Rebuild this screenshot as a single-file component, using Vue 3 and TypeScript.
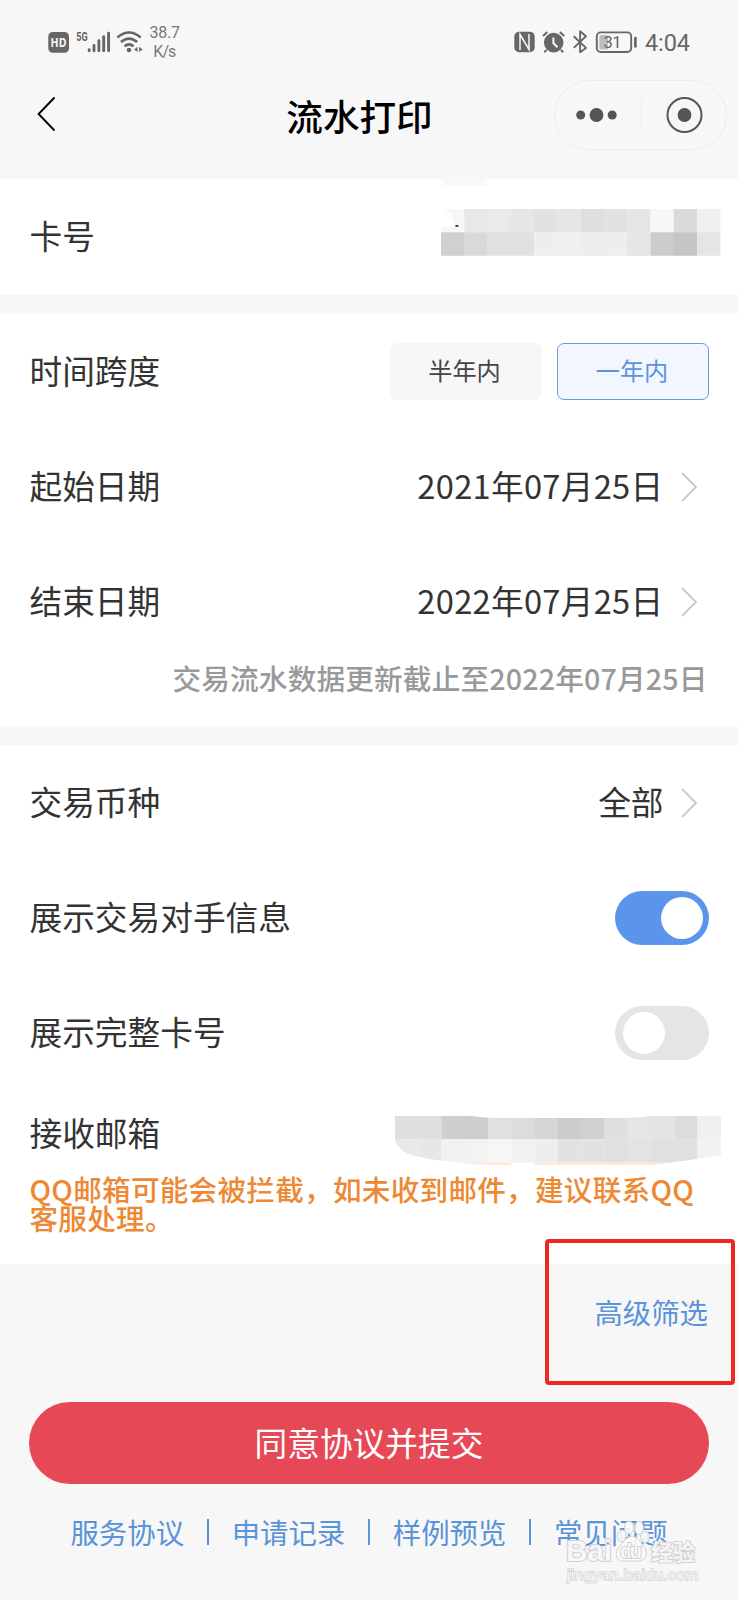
<script setup lang="ts">
import { ref } from 'vue'

interface Cell { x: number; y: number; fill: string }

const CELL = 23.27

function cells(rows: string[][]): Cell[] {
  return rows.flatMap((row, r) =>
    row.map((tone, c) => ({ x: c * CELL, y: r * CELL, fill: '#' + tone + tone + tone })),
  )
}

const cardMask = cells([
  ['f7', 'e8', 'ea', 'e6', 'e2', 'e6', 'df', 'e2', 'e5', 'f7', 'da', 'f0'],
  ['d0', 'd9', 'e0', 'e1', 'ee', 'ef', 'ed', 'ee', 'e6', 'cc', 'c5', 'e5'],
])
const mailMask = cells([
  ['df', 'df', 'cf', 'ce', 'e0', 'dc', 'd6', 'cc', 'd0', 'df', 'e5', 'e3', 'dc', 'f0'],
  ['e9', 'e7', 'f2', 'f3', 'f6', 'f1', 'ee', 'e2', 'e2', 'e0', 'e3', 'e0', 'e0', 'f2'],
])

const spans = ['半年内', '一年内']
const activeSpan = ref(1)
const dates = [
  { label: '起始日期', value: '2021年07月25日' },
  { label: '结束日期', value: '2022年07月25日' },
]
const switches = ref([
  { label: '展示交易对手信息', on: true },
  { label: '展示完整卡号', on: false },
])
const links = ['服务协议', '申请记录', '样例预览', '常见问题']
</script>

<template>
  <div class="page">
    <header>
      <div class="status">
        <svg width="140" height="40" viewBox="44 22 140 40">
          <rect x="48.3" y="32" width="20.7" height="20.7" rx="4.5" fill="#666" />
          <text x="50.6" y="47.3" class="hd" textLength="15.8" lengthAdjust="spacingAndGlyphs">HD</text>
          <text x="76.3" y="40.6" class="g5" textLength="11.4" lengthAdjust="spacingAndGlyphs">5G</text>
          <g stroke="#666" stroke-width="2.9" stroke-linecap="round">
            <path d="M89.2 49.8v1M94 45.5v5.3M98.9 40.8v10M103.7 36.7v14.1M108.6 33.2v17.6" />
          </g>
          <g fill="none" stroke="#666" stroke-width="2.6">
            <path d="M117.4 37.4Q129 27.6 140.7 37.4M121 42.1Q129 35.2 137.2 42.1M124.6 46.2Q129 42.4 133.6 46.2" />
          </g>
          <circle cx="129" cy="50" r="2.3" fill="#666" />
          <path d="M137.5 46.7v5.4l-3.4-2.7zM139.2 46.7v5.4l3.4-2.7z" fill="#666" />
          <text x="149.6" y="38.2" class="rate" textLength="30.4">38.7</text>
          <text x="153.3" y="56.8" class="rate" textLength="23">K/s</text>
        </svg>
        <svg width="190" height="40" viewBox="510 22 190 40">
          <rect x="514.3" y="31.8" width="20.4" height="20.4" rx="4.8" fill="#666" />
          <path d="M520 50V34.5L529 49.5V34M520 34.2L529.2 49.8" fill="none" stroke="#f7f7f7" stroke-width="1.5" />
          <circle cx="553.7" cy="42.6" r="9.8" fill="#666" />
          <path d="M543 36.1l4.3-4M564.2 36.1l-4.3-4M546.5 50l-2.2 2.2M561 50l2.2 2.2" stroke="#666" stroke-width="2" />
          <path d="M553.4 37.4v5.8l4.2 4" fill="none" stroke="#f7f7f7" stroke-width="2" />
          <path d="M573.7 36.2L586 47.9L580.1 52.3V31.2L586 36.3L573.7 47.9" fill="none" stroke="#666" stroke-width="1.9" stroke-linejoin="round" />
          <rect x="596.8" y="32.4" width="34.4" height="19.6" rx="4" fill="none" stroke="#666" stroke-width="1.9" />
          <rect x="599.3" y="35" width="8.7" height="14.5" rx="1.5" fill="#bebebe" />
          <path d="M635.4 38.2v8.2" stroke="#666" stroke-width="2.7" stroke-linecap="round" />
          <text x="603.6" y="48.3" class="batt" textLength="18">31</text>
          <text x="645" y="51" class="clock" textLength="45">4:04</text>
        </svg>
      </div>
      <div class="nav">
        <svg width="20" height="36" viewBox="0 0 20 36" class="back"><path d="M17.5 1.5L1.6 18L17.5 34.5" fill="none" stroke="#000" stroke-width="1.9" /></svg>
        <h1>流水打印</h1>
        <div class="capsule">
          <svg width="171" height="68" viewBox="555.3 80 171 68">
            <g fill="#555"><circle cx="581" cy="114" r="4.5" /><circle cx="596.8" cy="114" r="6.9" /><circle cx="612.5" cy="114" r="4.5" /><circle cx="684.8" cy="114" r="6.9" /></g>
            <path d="M641.7 98v32" stroke="#efefef" stroke-width="1.2" />
            <circle cx="684.8" cy="114" r="17" fill="none" stroke="#555" stroke-width="2" />
          </svg>
        </div>
      </div>
    </header>

    <section class="card">
      <svg class="smudge" width="50" height="8"><path d="M2 0H43L46 7H1z" fill="#f9f9f9" /></svg>
      <div class="row">
        <span class="label">卡号</span>
        <svg class="card-mask" width="280" height="47">
          <rect v-for="(c, i) in cardMask" :key="i" :x="c.x" :y="c.y" width="23.5" height="23.5" :fill="c.fill" />
          <path d="M0 0H3Q11 5 15 17V18H0z" fill="#fff" />
          <rect x="14.4" y="16" width="3" height="1.8" fill="#333" />
        </svg>
      </div>
    </section>

    <section>
      <div class="row">
        <span class="label">时间跨度</span>
        <div class="segments">
          <button v-for="(s, i) in spans" :key="s" :class="{ active: i === activeSpan }" @click="activeSpan = i">{{ s }}</button>
        </div>
      </div>
      <div v-for="d in dates" :key="d.label" class="row">
        <span class="label">{{ d.label }}</span>
        <div class="value"><span class="label date">{{ d.value }}</span><svg width="17" height="30" viewBox="0 0 17 30"><path d="M1 1L15 15L1 29" /></svg></div>
      </div>
      <p class="note">交易流水数据更新截止至2022年07月25日</p>
    </section>

    <section>
      <div class="row">
        <span class="label">交易币种</span>
        <div class="value"><span class="label">全部</span><svg width="17" height="30" viewBox="0 0 17 30"><path d="M1 1L15 15L1 29" /></svg></div>
      </div>
      <div v-for="s in switches" :key="s.label" class="row">
        <span class="label">{{ s.label }}</span>
        <button class="switch" :class="{ on: s.on }" @click="s.on = !s.on"><i></i></button>
      </div>
      <div class="row email">
        <span class="label">接收邮箱</span>
        <svg class="mail-mask" width="326" height="50">
          <defs><clipPath id="brush"><path d="M0 0H77Q90 2 110 2H225Q242 2 255 0H326V39Q290 45 258 49H110Q60 49 20 40Q3 36 0 23z" /></clipPath></defs>
          <g clip-path="url(#brush)">
            <rect v-for="(c, i) in mailMask" :key="i" :x="c.x" :y="c.y" width="23.5" height="23.5" :fill="c.fill" />
            <path d="M70 46.5H116V50H70zM140 46.5H270V50H140z" fill="#fde8dc" />
          </g>
        </svg>
      </div>
      <p class="warn">QQ邮箱可能会被拦截，如未收到邮件，建议联系QQ<br />客服处理。</p>
    </section>

    <footer>
      <div class="filter"><a>高级筛选</a><div class="highlight"></div></div>
      <button class="submit">同意协议并提交</button>
      <nav>
        <template v-for="(l, i) in links" :key="l"><i v-if="i"></i><a>{{ l }}</a></template>
      </nav>
      <svg class="watermark" width="136" height="70" viewBox="564 1518 136 70">
        <g fill="#fafafa" fill-opacity=".9" stroke="#d2d2d2" stroke-width="1">
          <ellipse cx="621.5" cy="1536" rx="4.3" ry="6" /><ellipse cx="629" cy="1527.5" rx="4.5" ry="6.5" />
          <ellipse cx="639" cy="1528" rx="4.5" ry="6.5" /><ellipse cx="645" cy="1537" rx="4.3" ry="6" />
          <path d="M632 1536Q637 1536 641 1543Q648 1549 646 1556Q644 1562 636 1561H628Q617 1563 616 1554Q616 1549 622 1544Q627 1536 632 1536z" />
          <text x="566" y="1561" class="bai" textLength="46">Bai</text>
          <text x="620" y="1558" class="du" textLength="22">du</text>
          <text x="651" y="1560" class="exp" textLength="44">经验</text>
          <text x="567" y="1580" class="url" textLength="131">jingyan.baidu.com</text>
        </g>
      </svg>
    </footer>
  </div>
</template>

<style>
body { background: #f7f7f7; }
</style>

<style scoped>
.page { width: 738px; height: 1600px; overflow: hidden; background: #f7f7f7; color: #333; font: 32.7px/46px "Noto Sans CJK SC", sans-serif; }
button { appearance: none; border: 0; padding: 0; font: inherit; }
p, h1 { margin: 0; }
svg { display: block; flex: none; }
header { height: 179px; }
.status { height: 40px; padding: 22px 38px 0 44px; display: flex; justify-content: space-between; }
.status text { fill: #666; font-family: Roboto, sans-serif; }
.status .hd { fill: #f7f7f7; font: 700 13px "Noto Sans", sans-serif; }
.status .g5 { font-size: 12px; font-weight: 700; }
.status .rate { font-size: 16px; fill: #777; }
.status .batt { font-size: 16.5px; }
.status .clock { font-size: 23.5px; }
.nav { height: 104px; display: grid; grid-template-columns: 185px 1fr 184px; align-items: center; }
.back { margin-left: 37px; }
h1 { text-align: center; color: #000; font-size: 36.6px; font-weight: 500; line-height: 50px; padding: 3px 20px 0 0; }
.capsule { width: 171px; height: 68px; border: 1px solid #ececec; border-radius: 36px; margin-top: 1px; }
section { background: #fff; margin-bottom: 19px; padding: 0 29px 0 29.5px; }
section.card { height: 116px; position: relative; }
.smudge { position: absolute; left: 442px; top: 0; }
.row { height: 115px; display: flex; align-items: center; justify-content: space-between; }
.label { padding-bottom: 3px; }
.date { letter-spacing: .27px; }
.card-mask { margin: -9px -11.5px 0 0; }
.segments { display: flex; gap: 15.5px; }
.segments button { width: 152px; height: 57px; box-sizing: border-box; border: 1px solid #f7f7f7; border-radius: 7px; background: #f7f7f7; color: #444; font-size: 24.2px; line-height: 50px; padding: 0 2px 3px 0; }
.segments .active { border-color: #6d9bd3; background: #f2f6fe; color: #5c93de; }
.value { display: flex; align-items: center; gap: 17.5px; padding-right: 11px; }
.value path { fill: none; stroke: #c8c8c8; stroke-width: 1.8; }
.note { height: 67px; line-height: 38px; font-size: 28.7px; letter-spacing: .12px; padding-right: 1.5px; box-sizing: border-box; color: #999; text-align: right; font-weight: 500; white-space: nowrap; }
.switch { width: 94.5px; height: 54px; box-sizing: border-box; padding: 6px 8px; border-radius: 27px; background: #e5e5e5; display: flex; }
.switch i { width: 42px; height: 42px; border-radius: 50%; background: #fff; }
.switch.on { background: #5a94eb; justify-content: flex-end; padding-right: 6px; }
.row.email { height: 86px; }
.mail-mask { margin: 15px -11.5px 0 0; }
.warn { height: 90px; margin-top: -2px; line-height: 29px; font-size: 28.6px; letter-spacing: .27px; font-weight: 500; color: #ed8833; white-space: nowrap; }
section:last-of-type { margin-bottom: 0; }
footer { padding: 0 29px; position: relative; }
a { color: #5b93d9; font-size: 28.4px; }
.filter { height: 138px; position: relative; display: flex; justify-content: flex-end; }
.filter a { margin: 24.5px 1px 0 0; }
.highlight { position: absolute; left: 516px; top: -25px; width: 182px; height: 138px; border: 4px solid #ea2a20; border-radius: 4px; }
.submit { width: 100%; height: 82px; border-radius: 41px; background: #e74856; color: #fff; display: block; padding-bottom: 2px; }
nav { display: flex; justify-content: center; align-items: center; gap: 22.8px; margin-top: 25px; }
nav i { width: 2px; height: 26px; background: #5b93d9; }
.watermark { position: absolute; left: 564px; top: 254px; }
.watermark text { font-family: "Liberation Sans", "Noto Sans CJK SC", sans-serif; paint-order: stroke; }
.bai { font-size: 30px; font-weight: 700; stroke-width: 2px; }
.du { font-size: 20px; font-weight: 700; stroke-width: 2px; }
.exp { font-size: 22px; font-weight: 700; stroke-width: 2px; }
.url { font-size: 15.5px; stroke-width: 1.4px; }
</style>
